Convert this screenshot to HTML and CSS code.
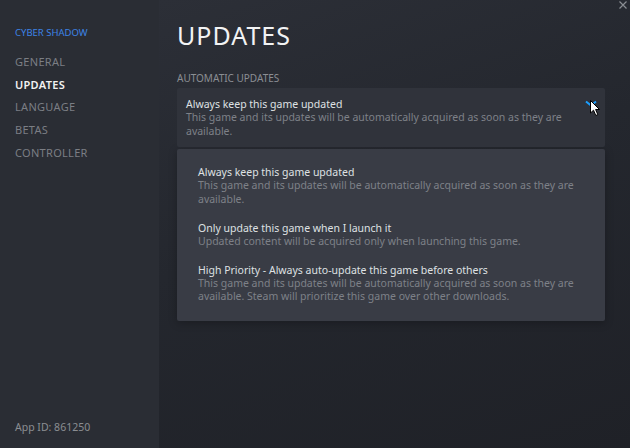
FILE: index.html
```html
<!DOCTYPE html>
<html>
<head>
<meta charset="utf-8">
<link rel="stylesheet" href="styles.css">
</head>
<body>
<div class="app">
  <aside class="sidebar">
    <div class="game">CYBER SHADOW</div>
    <nav class="nav">
      <div class="nav-item">GENERAL</div>
      <div class="nav-item active">UPDATES</div>
      <div class="nav-item">LANGUAGE</div>
      <div class="nav-item">BETAS</div>
      <div class="nav-item">CONTROLLER</div>
    </nav>
    <div class="appid">App ID: 861250</div>
  </aside>
  <main class="main">
    <div class="close">
      <svg width="8" height="8" viewBox="0 0 8 8"><path d="M0.5 0.5 L7.5 7.5 M7.5 0.5 L0.5 7.5" stroke="#8a8d92" stroke-width="1.2"/></svg>
    </div>
    <h1 class="title">UPDATES</h1>
    <div class="section-label">AUTOMATIC UPDATES</div>
    <div class="select">
      <div class="opt-text">
        <div class="opt-title">Always keep this game updated</div>
        <div class="opt-desc">This game and its updates will be automatically acquired as soon as they are available.</div>
      </div>
      <svg class="chev" width="12" height="8" viewBox="0 0 12 8"><path d="M1 1.5 L6 5.5 L11 1.5" fill="none" stroke="#1a9fff" stroke-width="2"/></svg>
      <svg class="cursor" width="11" height="17" viewBox="0 0 11 17"><path d="M0.5 0.5 L0.5 13 L3.5 10.2 L5.8 15.5 L7.8 14.6 L5.6 9.5 L9.5 9.5 Z" fill="#fff" stroke="#000" stroke-width="1"/></svg>
    </div>
    <div class="dropdown">
      <div class="item">
        <div class="opt-title">Always keep this game updated</div>
        <div class="opt-desc">This game and its updates will be automatically acquired as soon as they are available.</div>
      </div>
      <div class="item">
        <div class="opt-title">Only update this game when I launch it</div>
        <div class="opt-desc">Updated content will be acquired only when launching this game.</div>
      </div>
      <div class="item">
        <div class="opt-title">High Priority - Always auto-update this game before others</div>
        <div class="opt-desc">This game and its updates will be automatically acquired as soon as they are available. Steam will prioritize this game over other downloads.</div>
      </div>
    </div>
  </main>
</div>
</body>
</html>
```
FILE: styles.css
```css
* { box-sizing: border-box; margin: 0; padding: 0; }
html, body { width: 630px; height: 448px; overflow: hidden; }
body {
  font-family: "Noto Sans", "Open Sans", sans-serif;
  background: #24262d;
}
.app {
  display: flex;
  width: 630px;
  height: 448px;
}
.sidebar {
  width: 159px;
  flex: none;
  background: #2a2d34;
  display: flex;
  flex-direction: column;
  padding: 27px 0 14px 15px;
}
.game {
  font-size: 9.5px;
  color: #3d84e6;
  line-height: 12px;
  margin-bottom: 12px;
}
.nav { display: flex; flex-direction: column; }
.nav-item {
  font-size: 11px;
  color: #7b7e84;
  line-height: 22.7px;
  letter-spacing: 0.3px;
}
.nav-item.active { color: #f2f2f2; font-weight: 600; }
.appid {
  margin-top: auto;
  font-size: 10.5px;
  color: #8a8d92;
  line-height: 14px;
}
.main {
  flex: 1;
  position: relative;
  background: linear-gradient(160deg, #2c2f37 0%, #24272e 45%, #1f2127 100%);
  padding: 20px 25px 0 18px;
}
.close {
  position: absolute;
  top: 1px;
  right: 3px;
  width: 8px;
  height: 8px;
  display: flex;
}
.title {
  font-size: 25px;
  font-weight: 400;
  color: #f2f3f4;
  letter-spacing: 1px;
  line-height: 30px;
  margin-bottom: 21px;
}
.section-label {
  font-size: 10px;
  color: #8b8e93;
  line-height: 14px;
  margin-bottom: 3px;
}
.select {
  position: relative;
  background: #30333b;
  border-radius: 2px;
  padding: 9px 18px 8px 9px;
  height: 59px;
  display: flex;
  align-items: flex-start;
}
.opt-text { flex: 1; }
.opt-title {
  font-size: 10.5px;
  color: #dfe1e3;
  line-height: 14px;
}
.opt-desc {
  font-size: 10.5px;
  color: #7e8188;
  line-height: 13.5px;
}
.chev {
  position: absolute;
  right: 8px;
  top: 12px;
}
.cursor {
  position: absolute;
  right: 4px;
  top: 12px;
}
.dropdown {
  margin-top: 2px;
  background: #393c45;
  border-radius: 2px;
  padding: 16px 25px 17px 21px;
  box-shadow: 0 2px 8px rgba(0,0,0,0.25);
  display: flex;
  flex-direction: column;
  gap: 14.5px;
}
```
